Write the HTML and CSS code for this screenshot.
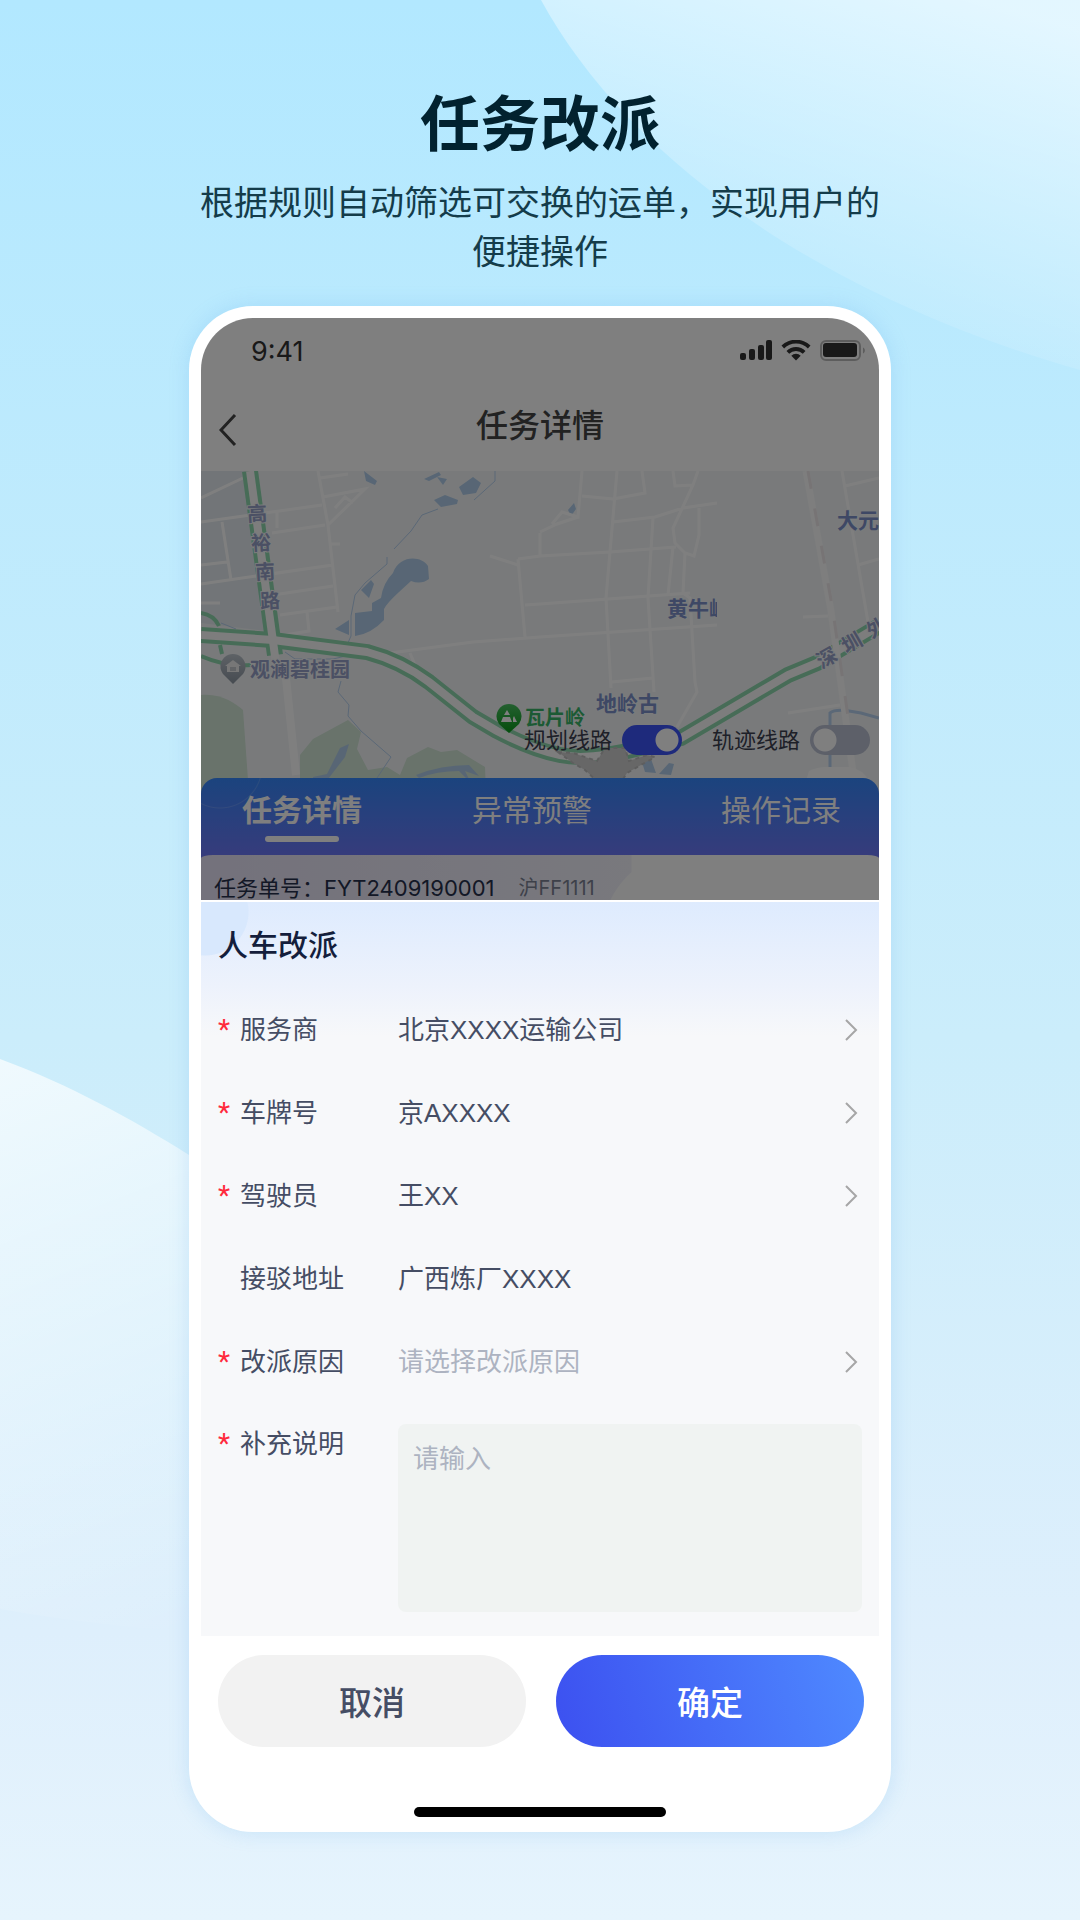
FILE: index.html
```html
<!DOCTYPE html>
<html lang="zh-CN">
<head>
  <meta charset="UTF-8">
  <meta name="viewport" content="width=device-width, initial-scale=1.0">
  <title>任务改派</title>
  <link rel="stylesheet" href="styles.css">
</head>
<body>
  <svg class="backdrop" viewBox="0 0 1080 1920" preserveAspectRatio="none" aria-hidden="true">
    <defs>
      <linearGradient id="glow-top" gradientUnits="userSpaceOnUse" x1="980" y1="0" x2="860" y2="370">
        <stop offset="0" stop-color="#fff" stop-opacity=".64"/>
        <stop offset="1" stop-color="#fff" stop-opacity="0"/>
      </linearGradient>
      <linearGradient id="glow-left" gradientUnits="userSpaceOnUse" x1="0" y1="1060" x2="220" y2="1620">
        <stop offset="0" stop-color="#fff" stop-opacity=".7"/>
        <stop offset="1" stop-color="#fff" stop-opacity="0"/>
      </linearGradient>
    </defs>
    <path d="M541 0C620 145 800 290 1080 370V0Z" fill="url(#glow-top)"/>
    <path d="M0 1059C70 1085 130 1118 189 1155L400 1300V1640C260 1640 120 1630 0 1609Z" fill="url(#glow-left)"/>
  </svg>

  <header class="intro">
    <h1>任务改派</h1>
    <p>根据规则自动筛选可交换的运单，实现用户的便捷操作</p>
  </header>

  <main class="phone">
    <div class="screen">
      <div class="detail">
        <div class="status-bar">
          <span class="time">9:41</span>
          <svg class="status-icons" width="126" height="22" viewBox="0 0 126 22" fill="#333">
            <rect x="0" y="13" width="6" height="7" rx="2"/>
            <rect x="9" y="9" width="6" height="11" rx="2"/>
            <rect x="18" y="5" width="6" height="15" rx="2"/>
            <rect x="26" y="0" width="6" height="20" rx="2"/>
            <path d="M41.500 5.500a21 21 0 0 1 29 0l-2.600 2.900a17 17 0 0 0-23.800 0z"/>
            <path d="M46.500 11a13.500 13.500 0 0 1 19 0l-2.700 2.800a9.600 9.600 0 0 0-13.600 0z"/>
            <path d="M51.300 15.800a6.600 6.600 0 0 1 9.400 0L56 20.500z"/>
            <rect x="81" y="1" width="39" height="19" rx="5" fill="none" stroke="#bbb" stroke-width="2"/>
            <rect x="83" y="3" width="34" height="14" rx="3"/>
            <path d="M123 7.500c2.500 1 2.500 5 0 6z" fill="#bbb"/>
          </svg>
        </div>

        <div class="nav-bar">
          <button class="back" type="button" aria-label="返回">
            <svg width="18" height="34" viewBox="0 0 18 34" fill="none" stroke="#444" stroke-width="3"><path d="M16 2L2 17l14 15"/></svg>
          </button>
          <h2>任务详情</h2>
        </div>

        <div class="map">
          <svg class="map-canvas" viewBox="0 0 678 323" preserveAspectRatio="xMinYMin slice">
            <defs>
              <clipPath id="tile"><rect x="460" y="120" width="56" height="40"/></clipPath>
              <linearGradient id="pin-gray" x1="0" y1="0" x2="0" y2="1"><stop offset="0" stop-color="#bcc4cc"/><stop offset="1" stop-color="#8c96a2"/></linearGradient>
              <linearGradient id="pin-green" x1="0" y1="0" x2="0" y2="1"><stop offset="0" stop-color="#48c060"/><stop offset="1" stop-color="#089a18"/></linearGradient>
            </defs>
            <rect width="678" height="323" fill="#f2f5f7"/>
            <path d="M0 0H44L66 160 0 152Z" fill="#e4ebf0"/>

            <!-- parks -->
            <g fill="#d2e6d6">
              <path d="M0 224C20 222 34 232 42 239L48 323H0Z"/>
              <path d="M99 323V284L112 268 147 249 160 261 156 278 167 299 186 296 199 304 206 287 227 276 240 281 256 279 284 296 285 323Z"/>
            </g>

            <!-- water -->
            <g fill="#b0cdea">
              <path d="M171 132L180 127Q182 112 192 102C198 84 220 84 227 95L228 108Q220 114 210 110L198 121Q186 132 183 138V149Q170 163 154 165V142L171 140Z"/>
              <path d="M160 119L170 109 173 113 168 127ZM134 158L148 149V164ZM163 0L176 10 174 14 165 10ZM223 8L238 1 240 4 228 10ZM236 6L246 8 242 14ZM258 16L272 6 280 12 275 22 262 24ZM233 29L244 24 257 29 256 33 240 36Z"/>
              <path d="M112 306L126 303 139 277 148 273 144 286 124 312H112ZM215 304Q240 294 268 294L278 305 264 300 270 312 258 300Q236 300 218 307Z"/>
              <path d="M367 39L373 32 375 38 370 45ZM441 291L450 288 455 302 444 301ZM458 303L468 292 473 293 470 304Z"/>
            </g>
            <g fill="none" stroke="#b6d0ee" stroke-width="1">
              <path d="M237 38L221 44 210 60 193 78M186 86L186 93 164 112 154 124 150 145V165L146 174M20 152L35 158M84 181L94 188H132L149 184M140 210L137 221 148 234 147 245 160 260 190 286 176 307 172 323M294 0V10L273 29"/>
              <path d="M629 296V242Q634 238 648 240L660 242 678 247" stroke-width="3"/>
            </g>

            <!-- side streets -->
            <g class="street">
              <path d="M0 27L42 7M0 51L121 34M0 94L26 91M0 113L132 94M21 51L30 109M117 0L127 54 137 141M76 41V57M71 62L124 54M119 7L147 3M122 26L164 18 127 54M134 37L144 26 152 32M129 73H139M72 124L132 115M79 144L136 136M106 141L108 160 84 164M0 132H19"/>
              <path d="M189 182L272 171 339 166 516 154M209 182L214 194M289 85L317 94M317 88L324 166M317 88L339 85 409 81 475 76M339 62V85M324 134L339 133 489 122"/>
              <path d="M381 0L377 46 361 41 351 53M339 61L356 53 377 46M416 0L405 127 410 217M441 0L444 22 412 28 381 25M472 0L474 15 492 14M497 0L492 14 472 57 474 72 484 82 493 85 498 64V37M412 51L454 46 482 37 516 32M452 47L447 127 453 221M472 76L467 124M484 82L482 122 489 127 494 211 496 221 476 256M411 211L452 207"/>
              <path d="M641 0L667 151M644 15L678 7M657 94L678 88M602 146L627 145M587 242L639 234"/>
              <path d="M85 207L95 304" stroke-width="8"/>
            </g>

            <!-- expressways: green casing, pale core -->
            <g class="casing">
              <path d="M49 0L74 184"/>
              <path d="M0 164L72 169 166 181Q200 190 228 211L272 246 296 260Q330 278 359 284T439 277L480 267 587 204 616 192 678 155"/>
            </g>
            <g class="core">
              <path d="M49 0L76 200"/>
              <path d="M0 164L72 169 166 181Q200 190 228 211L272 246 296 260Q330 278 359 284T439 277L480 267 587 204 616 192 678 155"/>
            </g>
            <path d="M0 142Q13 144 18 155M0 185Q25 196 50 194M19 174L21 183" fill="none" stroke="#8ed8ae" stroke-width="4"/>

            <!-- railway -->
            <path d="M605 0L630 140 655 323" fill="none" stroke="#fcfcfc" stroke-width="7"/>
            <path d="M607 0L632 140 658 323" fill="none" stroke="#eee8ea" stroke-width="3" stroke-dasharray="18 20"/>

            <path d="M357 281L372 282 396 290 404 277H424L428 290 446 284 454 286 426 302 418 314H400L384 299 372 292Z" fill="#cfcfcf" stroke="#bdbdbd" stroke-width="2" stroke-dasharray="4 4"/>
            <path d="M601 323L608 300Q616 296 626 296H648Q662 298 668 310V323Z" fill="#fff"/>

            <g class="road-name">
              <text x="46" y="50" transform="rotate(-3 56 43)">高</text>
              <text x="50" y="79" transform="rotate(-3 60 72)">裕</text>
              <text x="54" y="108" transform="rotate(-3 64 101)">南</text>
              <text x="59" y="137" transform="rotate(-3 69 130)">路</text>
              <text x="616" y="194" transform="rotate(-30 626 187)">深</text>
              <text x="641" y="179" transform="rotate(-30 651 172)">圳</text>
              <text x="666" y="164" transform="rotate(-30 676 157)">外</text>
              <text x="49" y="206">观澜碧桂园</text>
            </g>
            <g class="place-name">
              <text x="636" y="57">大元</text>
              <text x="466" y="145" clip-path="url(#tile)">黄牛岭</text>
              <text x="395" y="240">地岭古</text>
            </g>
            <text class="park-name" x="324" y="254">瓦片岭</text>

            <path d="M32 213L22 203A12.500 12.500 0 1 1 42 203Z" fill="url(#pin-gray)"/>
            <path d="M24 195L32 189 40 195H38V201H26V195Z" fill="#eee"/>
            <path d="M29 197H35M29 199H35" stroke="#9aa3ad"/>
            <path d="M308 262L298 253A12.500 12.500 0 1 1 318 253Z" fill="url(#pin-green)"/>
            <path d="M300 251L302 246H309L311 251ZM303 244L306 239 309 244ZM312 251V247L313 245 316 251Z" fill="#fff"/>
          </svg>
          <div class="map-switches">
            <label class="switch"><span>规划线路</span><input type="checkbox" checked></label>
            <label class="switch"><span>轨迹线路</span><input type="checkbox"></label>
          </div>
        </div>

        <nav class="tabs">
          <button class="tab active" type="button">任务详情</button>
          <button class="tab" type="button">异常预警</button>
          <button class="tab last" type="button">操作记录</button>
        </nav>

        <div class="order">
          <span class="order-no">任务单号：FYT2409190001</span>
          <span class="plate">沪FF1111</span>
        </div>
      </div>

      <form class="sheet">
        <div class="fields">
          <h3>人车改派</h3>

          <div class="row">
            <label class="required" for="provider">服务商</label>
            <select id="provider"><option>北京XXXX运输公司</option></select>
            <svg class="arrow" viewBox="0 0 14 24"><path d="M2 2l10 10L2 22"/></svg>
          </div>
          <div class="row">
            <label class="required" for="plate">车牌号</label>
            <select id="plate"><option>京AXXXX</option></select>
            <svg class="arrow" viewBox="0 0 14 24"><path d="M2 2l10 10L2 22"/></svg>
          </div>
          <div class="row">
            <label class="required" for="driver">驾驶员</label>
            <select id="driver"><option>王XX</option></select>
            <svg class="arrow" viewBox="0 0 14 24"><path d="M2 2l10 10L2 22"/></svg>
          </div>
          <div class="row">
            <label for="address">接驳地址</label>
            <input id="address" type="text" value="广西炼厂XXXX">
          </div>
          <div class="row">
            <label class="required" for="reason">改派原因</label>
            <select id="reason" class="empty"><option>请选择改派原因</option></select>
            <svg class="arrow" viewBox="0 0 14 24"><path d="M2 2l10 10L2 22"/></svg>
          </div>
          <div class="row note">
            <label class="required" for="note">补充说明</label>
            <textarea id="note" placeholder="请输入"></textarea>
          </div>
        </div>

        <div class="actions">
          <button class="cancel" type="button">取消</button>
          <button class="confirm" type="submit">确定</button>
        </div>
        <div class="home-bar"></div>
      </form>
    </div>
  </main>
</body>
</html>
```

FILE: styles.css
```css
* {
  box-sizing: border-box;
}
body {
  position: relative;
  margin: 0;
  min-height: 100vh;
  padding: 84px 0 88px;
  background: linear-gradient(#b2e8ff, #cbedfb 54%, #deeffc 85%, #e6f4fd);
  font-family: "Liberation Sans", "Noto Sans CJK SC", sans-serif;
  color: #454d64;
}
h1, h2, h3, p {
  margin: 0;
}
button, input, select, textarea {
  font: inherit;
  color: inherit;
  border: none;
  background: none;
  padding: 0;
  margin: 0;
}
.backdrop {
  position: absolute;
  inset: 0;
  width: 100%;
  height: 100%;
}

/* intro */
.intro {
  position: relative;
  width: 65%;
  margin: 0 auto;
  padding: 0 11px;
  text-align: center;
}
.intro h1 {
  font-size: 60px;
  line-height: 84px;
  font-weight: 700;
  color: #02222f;
}
.intro p {
  margin-top: 11px;
  font-size: 34px;
  line-height: 49px;
  color: #143c4a;
}

/* phone */
.phone {
  position: relative;
  width: 65%;
  margin: 29px auto 0;
  padding: 12px;
  border-radius: 64px;
  background: #fff;
  box-shadow: 0 0 20px rgba(90, 170, 230, 0.22);
}
.screen {
  border-radius: 52px;
  overflow: hidden;
}
.detail {
  position: relative;
  background: #fff;
}
.detail::after {
  content: "";
  position: absolute;
  inset: 0;
  background: rgba(0, 0, 0, 0.5);
}
.status-bar {
  display: flex;
  justify-content: space-between;
  align-items: center;
  height: 66px;
  padding: 0 13px 0 50px;
}
.time {
  font-family: Inter, sans-serif;
  font-size: 27px;
  color: #333;
}
.nav-bar {
  display: grid;
  grid-template-columns: 60px 1fr 60px;
  align-items: center;
  height: 87px;
}
.nav-bar h2 {
  padding-bottom: 4px;
  font-size: 32px;
  line-height: 44px;
  font-weight: 500;
  text-align: center;
  color: #444;
}
.back {
  display: flex;
  padding: 4px 0 0 18px;
}

/* map */
.map {
  position: relative;
  height: 323px;
  overflow: hidden;
}
.map-canvas {
  display: block;
  width: 100%;
  height: 100%;
  font-family: "Noto Sans CJK SC", sans-serif;
  font-weight: 700;
}
.street {
  fill: none;
  stroke: #fff;
  stroke-width: 3;
}
.casing {
  fill: none;
  stroke: #8ed8ae;
  stroke-width: 16;
}
.core {
  fill: none;
  stroke: #fafafa;
  stroke-width: 8;
}
.road-name {
  font-size: 20px;
  fill: #96a0c8;
  stroke: #f4f7f9;
  stroke-width: 2;
  paint-order: stroke;
}
.place-name {
  font-size: 21px;
  fill: #7c90ca;
  stroke: #f4f7f9;
  stroke-width: 2;
  paint-order: stroke;
}
.park-name {
  font-size: 20px;
  fill: #38b468;
  stroke: #f4f7f9;
  stroke-width: 2;
  paint-order: stroke;
}
.map-switches {
  position: absolute;
  right: 9px;
  bottom: 39px;
  display: flex;
  gap: 30px;
}
.switch {
  display: flex;
  align-items: center;
  gap: 10px;
  height: 30px;
  font-size: 22px;
  color: #3c4050;
}
.switch span {
  padding-bottom: 4px;
}
.switch input {
  appearance: none;
  width: 60px;
  height: 30px;
  border-radius: 15px;
  background: radial-gradient(circle at 15px 15px, #fff 11px, transparent 12px) #bac0d2;
}
.switch input:checked {
  background: radial-gradient(circle at 45px 15px, #fff 11px, transparent 12px) #3c54f8;
}

/* tabs */
.tabs {
  position: relative;
  display: flex;
  gap: 110px;
  height: 93px;
  margin: -16px 0 -16px;
  padding: 0 38px 0 41px;
  border-radius: 16px 16px 0 0;
  background:
    radial-gradient(circle at 19px -12px, transparent 41px, rgba(255, 255, 255, 0.15) 42px, transparent 43px),
    linear-gradient(#3688fc, #6c78f8 77px);
}
.tab {
  position: relative;
  height: 66px;
  padding-bottom: 6px;
  font-size: 30px;
  color: #fff;
}
.tab.active {
  font-weight: 700;
}
.tab.active::after {
  content: "";
  position: absolute;
  left: 23px;
  right: 23px;
  bottom: 2px;
  height: 6px;
  border-radius: 3px;
  background: #fff;
}
.tab.last {
  margin-left: auto;
}
.order {
  position: relative;
  display: flex;
  align-items: center;
  gap: 24px;
  height: 45px;
  padding: 20px 14px 0 13px;
  overflow: hidden;
  line-height: 24px;
  white-space: nowrap;
  border-radius: 12px 12px 0 0 / 3px 3px 0 0;
  background:
    radial-gradient(circle at 490px 84px, #fff 89px, transparent 90px),
    linear-gradient(90deg, #e8e4f8, #f2f2fb 430px, #fff 431px);
  font-family: Inter, "Noto Sans CJK SC", sans-serif;
}
.order-no {
  font-size: 22px;
  color: #26304c;
}
.plate {
  font-size: 20px;
  color: #7c8294;
}

/* reassign sheet */
.sheet {
  background: #fff;
}
.fields {
  padding: 22px 17px 24px;
  border-top: 2px solid #fff;
  background:
    radial-gradient(circle at 4px 10px, #d8e8fd 43px, transparent 44px),
    linear-gradient(#deebfe, #edf2fc 84px, #f7f8fa 134px);
}
.fields h3 {
  margin-bottom: 20px;
  font-size: 30px;
  line-height: 44px;
  font-weight: 500;
  color: #141e3c;
}
.row {
  position: relative;
  display: grid;
  grid-template-columns: 180px 1fr;
  align-items: center;
  height: 83px;
  font-size: 26px;
  line-height: 40px;
}
.row label {
  position: relative;
  padding-left: 22px;
}
.required::before {
  content: "*";
  position: absolute;
  left: 0;
  font-family: Roboto, sans-serif;
  font-size: 28px;
  color: #ff2a3c;
}
.row select,
.row input {
  appearance: none;
  width: 100%;
  height: 40px;
}
.row select.empty {
  color: #adb3c1;
}
.arrow {
  position: absolute;
  right: 4px;
  width: 14px;
  height: 24px;
  fill: none;
  stroke: #a6a6a6;
  stroke-width: 2;
  pointer-events: none;
}
.row.note {
  align-items: start;
  height: auto;
  padding-top: 21px;
}
.row textarea {
  display: block;
  width: 100%;
  height: 188px;
  padding: 15px;
  border-radius: 8px;
  background: #f0f3f2;
  resize: none;
}
.row textarea::placeholder {
  color: #adb3c1;
}
.actions {
  display: flex;
  gap: 30px;
  padding: 19px 15px 0 17px;
}
.actions button {
  flex: 1;
  height: 92px;
  border-radius: 46px;
  font-size: 33px;
  font-weight: 500;
}
.cancel {
  background: #f2f2f2;
}
.actions .confirm {
  color: #fff;
  background: linear-gradient(75deg, #3c50f0, #4f8aff);
}
.home-bar {
  width: 252px;
  height: 10px;
  margin: 60px auto 3px;
  border-radius: 5px;
  background: #000;
}
```
